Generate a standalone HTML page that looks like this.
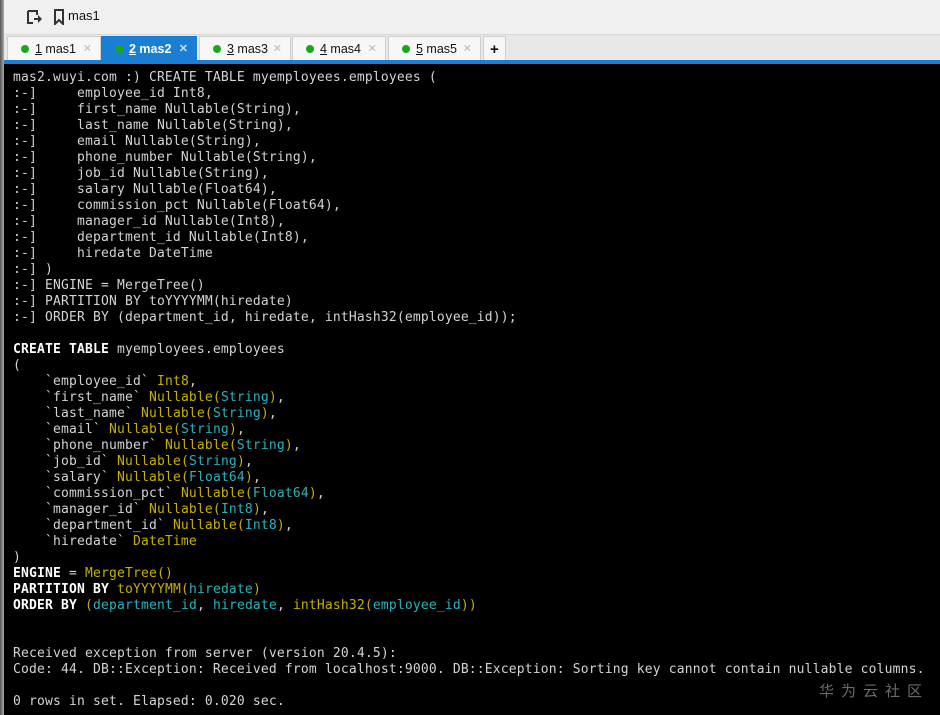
<!DOCTYPE html>
<html><head><meta charset="utf-8"><style>
*{margin:0;padding:0;box-sizing:border-box}
body{width:940px;height:715px;overflow:hidden;background:#000;position:relative;font-family:"Liberation Sans",sans-serif}
.lstrip{position:absolute;left:0;top:0;width:4px;height:715px;background:linear-gradient(90deg,#555,#aaa)}
.top{position:absolute;left:4px;top:0;width:936px;height:34px;background:#f0f0f0}
.tabs{position:absolute;left:4px;top:34px;width:936px;height:27px;background:#e8e8e8;border-top:1px solid #d8d8d8}
.bar{position:absolute;left:4px;top:60px;width:936px;height:4px;background:#1a7fd4}
.tab{position:absolute;top:1px;height:26px;background:#f7f7f7;border:1px solid #cfcfcf;border-bottom:none;font-size:12.5px;color:#111;line-height:25px;padding-left:13px}
.tab .d{display:inline-block;width:8px;height:8px;border-radius:50%;background:#1aa81a;margin-right:6px;vertical-align:0}
.tab .x{position:absolute;right:8px;top:0;color:#bbb;font-size:11px}
.tab.a{background:#1a7fd4;color:#fff;border-color:#1a7fd4;font-weight:bold}
.tab.a .x{color:#cde}
u{text-decoration:underline}
pre{position:absolute;left:13px;top:70px;font-family:"DejaVu Sans Mono","Liberation Mono",monospace;font-size:13px;letter-spacing:0.17px;line-height:16px;color:#d4d4d4}
b{color:#fff}
.y{color:#c9b000}.c{color:#2ab3bd}
.wm{position:absolute;left:819px;top:680px;color:#6a6a6a;font-family:"Noto Sans CJK SC",sans-serif;font-size:15px;letter-spacing:7px}
</style></head><body>
<div class="lstrip"></div>
<div class="top">
<svg style="position:absolute;left:22px;top:9px" width="16" height="16" viewBox="0 0 16 16"><path d="M2 2h9v4M2 2v12h5" fill="none" stroke="#333" stroke-width="2"/><path d="M8 9h4V6l4 4-4 4v-3H8z" fill="#333"/></svg>
<svg style="position:absolute;left:49px;top:9px" width="12" height="16" viewBox="0 0 12 16"><path d="M2 1h8v14l-4-4-4 4z" fill="none" stroke="#333" stroke-width="2"/></svg>
<span style="position:absolute;left:64px;top:8px;font-size:13px;color:#111">mas1</span>
</div>
<div class="tabs">
<div class="tab" style="left:3px;width:94px"><span class="d"></span><u>1</u> mas1<span class="x">✕</span></div>
<div class="tab a" style="left:97px;width:96px"><span class="d"></span><u>2</u> mas2<span class="x">✕</span></div>
<div class="tab" style="left:195px;width:92px"><span class="d"></span><u>3</u> mas3<span class="x">✕</span></div>
<div class="tab" style="left:288px;width:94px"><span class="d"></span><u>4</u> mas4<span class="x">✕</span></div>
<div class="tab" style="left:384px;width:93px"><span class="d"></span><u>5</u> mas5<span class="x">✕</span></div>
<div class="tab" style="left:479px;width:23px;padding-left:6px;font-weight:bold;font-size:15px">+</div>
</div>
<div class="bar"></div>
<pre>mas2.wuyi.com :) CREATE TABLE myemployees.employees (
:-]     employee_id Int8,
:-]     first_name Nullable(String),
:-]     last_name Nullable(String),
:-]     email Nullable(String),
:-]     phone_number Nullable(String),
:-]     job_id Nullable(String),
:-]     salary Nullable(Float64),
:-]     commission_pct Nullable(Float64),
:-]     manager_id Nullable(Int8),
:-]     department_id Nullable(Int8),
:-]     hiredate DateTime
:-] )
:-] ENGINE = MergeTree()
:-] PARTITION BY toYYYYMM(hiredate)
:-] ORDER BY (department_id, hiredate, intHash32(employee_id));

<b>CREATE TABLE</b> myemployees.employees
(
    `employee_id` <span class="y">Int8</span>,
    `first_name` <span class="y">Nullable(</span><span class="c">String</span><span class="y">)</span>,
    `last_name` <span class="y">Nullable(</span><span class="c">String</span><span class="y">)</span>,
    `email` <span class="y">Nullable(</span><span class="c">String</span><span class="y">)</span>,
    `phone_number` <span class="y">Nullable(</span><span class="c">String</span><span class="y">)</span>,
    `job_id` <span class="y">Nullable(</span><span class="c">String</span><span class="y">)</span>,
    `salary` <span class="y">Nullable(</span><span class="c">Float64</span><span class="y">)</span>,
    `commission_pct` <span class="y">Nullable(</span><span class="c">Float64</span><span class="y">)</span>,
    `manager_id` <span class="y">Nullable(</span><span class="c">Int8</span><span class="y">)</span>,
    `department_id` <span class="y">Nullable(</span><span class="c">Int8</span><span class="y">)</span>,
    `hiredate` <span class="y">DateTime</span>
)
<b>ENGINE</b> = <span class="y">MergeTree()</span>
<b>PARTITION BY</b> <span class="y">toYYYYMM(</span><span class="c">hiredate</span><span class="y">)</span>
<b>ORDER BY</b> <span class="y">(</span><span class="c">department_id</span>, <span class="c">hiredate</span>, <span class="y">intHash32(</span><span class="c">employee_id</span><span class="y">))</span>


Received exception from server (version 20.4.5):
Code: 44. DB::Exception: Received from localhost:9000. DB::Exception: Sorting key cannot contain nullable columns.

0 rows in set. Elapsed: 0.020 sec.</pre>
<div class="wm">华为云社区</div>
</body></html>
